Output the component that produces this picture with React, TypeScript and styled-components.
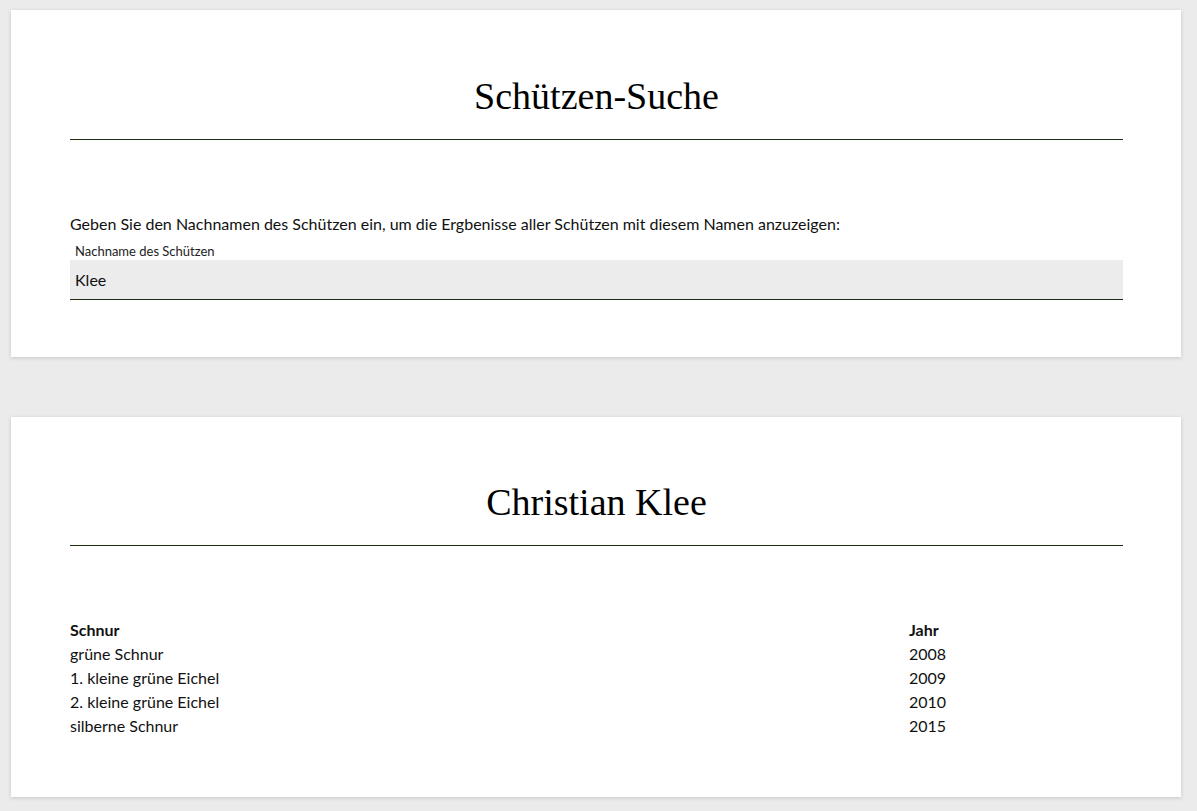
import React, { useState } from "react";
import styled, { createGlobalStyle } from "styled-components";

const GlobalStyle = createGlobalStyle`
  html, body {
    margin: 0;
    padding: 0;
    background: #ebebeb;
  }
  body {
    font-family: Lato, "Open Sans", sans-serif;
    color: #111;
  }
`;

const Page = styled.div`
  display: flex;
  flex-direction: column;
  gap: 60px;
  padding: 10px 16px 14px 11px;
`;

const Card = styled.section<{ top?: number; bottom?: number }>`
  background: #fff;
  box-shadow: 0 1px 4px rgba(0, 0, 0, 0.16);
  padding: ${({ top }) => top ?? 64}px 58px ${({ bottom }) => bottom ?? 57}px 59px;
`;

const Heading = styled.h1`
  margin: 0;
  padding-bottom: 21px;
  border-bottom: 1px solid #1b2f0e;
  font-family: "Liberation Serif", "DejaVu Serif", serif;
  font-weight: 400;
  font-size: 38px;
  line-height: 44px;
  text-align: center;
  color: #000;
`;

const Intro = styled.p`
  margin: 72px 0 0;
  font-size: 16px;
  line-height: 24px;
`;

const Field = styled.label`
  display: flex;
  flex-direction: column;
  margin-top: 6px;
`;

const FieldLabel = styled.span`
  padding-left: 5px;
  font-size: 13px;
  line-height: 18px;
  color: #222;
`;

const Input = styled.input`
  height: 40px;
  box-sizing: border-box;
  border: none;
  border-bottom: 1px solid #1b2f0e;
  background: #ececec;
  padding: 0 5px;
  font-family: Lato, "Open Sans", sans-serif;
  font-size: 16px;
  color: #111;
  outline: none;
`;

const Table = styled.div`
  display: grid;
  grid-template-columns: 839px 1fr;
  margin-top: 72px;
  font-size: 16px;
  line-height: 24px;
`;

const Cell = styled.div<{ head?: boolean }>`
  font-weight: ${({ head }) => (head ? 700 : 400)};
`;

const awards = [
  { name: "grüne Schnur", year: 2008 },
  { name: "1. kleine grüne Eichel", year: 2009 },
  { name: "2. kleine grüne Eichel", year: 2010 },
  { name: "silberne Schnur", year: 2015 },
];

const App: React.FC = () => {
  const [name, setName] = useState("Klee");

  return (
    <>
      <GlobalStyle />
      <Page>
        <Card>
          <Heading>Schützen-Suche</Heading>
          <Intro>
            Geben Sie den Nachnamen des Schützen ein, um die Ergbenisse aller Schützen mit diesem Namen anzuzeigen:
          </Intro>
          <Field>
            <FieldLabel>Nachname des Schützen</FieldLabel>
            <Input value={name} onChange={(e) => setName(e.target.value)} />
          </Field>
        </Card>
        <Card top={63} bottom={59}>
          <Heading>Christian {name}</Heading>
          <Table>
            <Cell head>Schnur</Cell>
            <Cell head>Jahr</Cell>
            {awards.map((a) => (
              <React.Fragment key={a.name}>
                <Cell>{a.name}</Cell>
                <Cell>{a.year}</Cell>
              </React.Fragment>
            ))}
          </Table>
        </Card>
      </Page>
    </>
  );
};

export default App;
